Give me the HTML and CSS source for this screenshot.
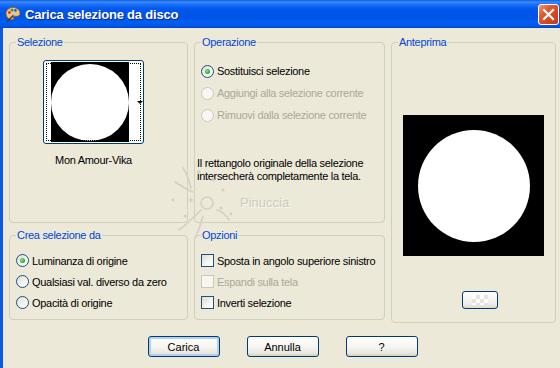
FILE: index.html
```html
<!DOCTYPE html>
<html lang="it">
<head>
    <meta charset="UTF-8">
    <meta name="viewport" content="width=device-width, initial-scale=1.0">
    <title>Carica selezione da disco</title>
    <link rel="stylesheet" href="styles.css">
</head>
<body>

<div class="window">
    <div class="titlebar">
        <svg class="app-icon" viewBox="0 0 16 16" width="16" height="16">
            <path d="M8 1.5C4 1.5 1 4.2 1 7.6c0 3.5 2.9 6 6.3 6 1.2 0 1.6-.8 1.1-1.6-.5-.8 0-1.7 1-1.7h2.4c2 0 3.2-1.3 3.2-3.1C15 4.1 12 1.5 8 1.5z" fill="#EBC48E" stroke="#8A5A2B" stroke-width="0.8"/>
            <circle cx="4.4" cy="6.6" r="1.4" fill="#E02424"/>
            <circle cx="7" cy="4.2" r="1.4" fill="#2FA02F"/>
            <circle cx="10.4" cy="4.4" r="1.3" fill="#2255E0"/>
            <circle cx="12.5" cy="7.2" r="1.2" fill="#F2D21E"/>
            <path d="M2.5 15.2l6.5-6.4" stroke="#5B3414" stroke-width="1.6" stroke-linecap="round"/>
            <path d="M9 8.8l1.6-1.6" stroke="#C9C9C9" stroke-width="1.8" stroke-linecap="round"/>
        </svg>
        <span class="title">Carica selezione da disco</span>
        <button class="close-btn" type="button" aria-label="Chiudi">
            <svg viewBox="0 0 19 19" width="19" height="19">
                <path d="M5 5l9 9M14 5l-9 9" stroke="#fff" stroke-width="2.2" stroke-linecap="square"/>
            </svg>
        </button>
    </div>

    <div class="client">
        <div class="groups">
            <fieldset class="group">
                <legend>Selezione</legend>
                <div class="sel-body">
                    <div class="thumb">
                        <div class="thumb-img"><div class="thumb-disc"></div></div>
                        <span class="drop-arrow"></span>
                    </div>
                    <div class="thumb-name">Mon Amour-Vika</div>
                </div>
            </fieldset>

            <fieldset class="group">
                <legend>Operazione</legend>
                <div class="op-body">
                    <label class="choice"><input type="radio" class="radio" name="op" checked>Sostituisci selezione</label>
                    <label class="choice disabled"><input type="radio" class="radio" name="op" disabled>Aggiungi alla selezione corrente</label>
                    <label class="choice disabled"><input type="radio" class="radio" name="op" disabled>Rimuovi dalla selezione corrente</label>
                    <p class="info">Il rettangolo originale della selezione<br>intersecherà completamente la tela.</p>
                </div>
            </fieldset>

            <fieldset class="group group-preview">
                <legend>Anteprima</legend>
                <div class="preview-body">
                    <div class="preview-box"><div class="preview-disc"></div></div>
                    <button class="swatch-btn" type="button"><span class="checker"></span></button>
                </div>
            </fieldset>

            <fieldset class="group">
                <legend>Crea selezione da</legend>
                <div class="list-body">
                    <label class="choice"><input type="radio" class="radio" name="src" checked>Luminanza di origine</label>
                    <label class="choice"><input type="radio" class="radio" name="src">Qualsiasi val. diverso da zero</label>
                    <label class="choice"><input type="radio" class="radio" name="src">Opacità di origine</label>
                </div>
            </fieldset>

            <fieldset class="group">
                <legend>Opzioni</legend>
                <div class="list-body">
                    <label class="choice"><input type="checkbox" class="check">Sposta in angolo superiore sinistro</label>
                    <label class="choice disabled"><input type="checkbox" class="check" disabled>Espandi sulla tela</label>
                    <label class="choice"><input type="checkbox" class="check">Inverti selezione</label>
                </div>
            </fieldset>
        </div>

        <div class="actions">
            <button class="btn btn-default" type="button">Carica</button>
            <button class="btn" type="button">Annulla</button>
            <button class="btn" type="button">?</button>
        </div>
    </div>

    <div class="watermark">
        <svg viewBox="0 0 90 80" width="90" height="80">
            <g fill="none" stroke="#D3D0C3" stroke-width="1.6" stroke-linecap="round">
                <circle cx="42" cy="43" r="6"/>
                <path d="M10 22c6 4 12 8 18 10"/>
                <path d="M18 8c4 6 6 12 8 20"/>
                <path d="M14 70c8-6 14-12 22-20"/>
                <path d="M30 78c4-8 6-14 8-22"/>
                <path d="M52 50c6 2 10 6 12 10"/>
            </g>
            <g fill="#D3D0C3">
                <circle cx="34" cy="12" r="1.8"/>
                <circle cx="48" cy="20" r="1.8"/>
                <circle cx="58" cy="30" r="1.6"/>
                <circle cx="26" cy="40" r="1.8"/>
                <circle cx="56" cy="48" r="1.6"/>
                <circle cx="66" cy="54" r="1.4"/>
                <circle cx="20" cy="56" r="1.6"/>
                <circle cx="8" cy="40" r="1.4"/>
            </g>
        </svg>
        <span class="watermark-text">Pinuccia</span>
    </div>
</div>

</body>
</html>
```

FILE: styles.css
```css
body {
    margin: 0;
    font-family: "Liberation Sans", Arial, sans-serif;
    font-size: 11px;
    letter-spacing: -0.3px;
    color: #000;
    background-color: #ECE9D8;
}
.window {
    position: relative;
    width: 560px;
    height: 368px;
    overflow: hidden;
    background-color: #ECE9D8;
}

/* title bar */
.titlebar {
    height: 28px;
    display: flex;
    align-items: center;
    padding-left: 5px;
    background: linear-gradient(to bottom, #0A5FD8 0, #3D8BFF 2px, #1F72F8 4px, #0058EE 9px, #0053E3 16px, #005EF2 23px, #0057E8 26px, #0040C8 28px);
}
.app-icon {
    flex: none;
}
.title {
    margin-left: 4px;
    color: #fff;
    font-weight: bold;
    font-size: 13px;
    letter-spacing: -0.2px;
    text-shadow: 1px 1px 0 #0A2A9A;
}
.close-btn {
    margin-left: auto;
    margin-right: 1px;
    width: 21px;
    height: 21px;
    padding: 0;
    display: flex;
    align-items: center;
    justify-content: center;
    border: 1px solid #fff;
    border-radius: 3px;
    background: linear-gradient(135deg, #F0987A 0, #E2582F 35%, #D4431E 70%, #C23A1B 100%);
}

/* client area */
.client {
    height: 340px;
    box-sizing: border-box;
    border-left: 3px solid #0B58E6;
    padding: 8px 4px 0 6px;
}
.groups {
    display: grid;
    grid-template-columns: 179px 191px 165px;
    grid-template-rows: 187px 91px;
    gap: 6px;
}
.group {
    margin: 0;
    padding: 0 6px;
    min-width: 0;
    border: 1px solid #D0D0BF;
    border-radius: 4px;
}
.group legend {
    padding: 0 1px;
    color: #0046D5;
}
.group-preview {
    grid-row: span 2;
    margin-bottom: -3px;
}

/* selezione */
.sel-body {
    display: flex;
    flex-direction: column;
    align-items: center;
    padding: 12px 10px 0 0;
}
.thumb {
    width: 101px;
    height: 84px;
    box-sizing: border-box;
    display: flex;
    align-items: center;
    padding: 1px 0 1px 7px;
    border: 1px solid #003C74;
    border-radius: 3px;
    background: #fff;
    outline: 1px dotted #000;
    outline-offset: -4px;
}
.thumb-img {
    width: 78px;
    height: 80px;
    display: flex;
    align-items: center;
    justify-content: center;
    background: #000;
}
.thumb-disc {
    width: 78px;
    height: 77px;
    border-radius: 50%;
    background: #fff;
}
.drop-arrow {
    margin-left: 8px;
    border-left: 3px solid transparent;
    border-right: 3px solid transparent;
    border-top: 3px solid #000;
}
.thumb-name {
    margin-top: 10px;
}

/* radio / checkbox rows */
.op-body {
    padding-top: 12px;
}
.list-body {
    padding-top: 9px;
}
.choice {
    display: flex;
    align-items: center;
    gap: 3px;
    height: 21px;
}
.op-body .choice {
    height: 22px;
}
.choice.disabled {
    color: #ACA899;
}
.radio, .check {
    appearance: none;
    flex: none;
    position: relative;
    width: 13px;
    height: 13px;
    margin: 0;
    border: 1px solid #1C5180;
    background: linear-gradient(135deg, #DCDBD3 0, #F4F4F0 55%, #fff 100%);
}
.radio {
    border-radius: 50%;
}
.radio:checked::after {
    content: '';
    position: absolute;
    left: 3px;
    top: 3px;
    width: 5px;
    height: 5px;
    border-radius: 50%;
    background: radial-gradient(circle at 40% 40%, #8BEA8B, #21A121 70%);
}
.radio:disabled, .check:disabled {
    border-color: #CAC8BB;
    background: #F7F6F1;
}
.info {
    margin: 31px 0 0 -4px;
    line-height: 13px;
}

/* anteprima */
.preview-body {
    display: flex;
    flex-direction: column;
    padding-top: 67px;
}
.preview-box {
    align-self: center;
    width: 141px;
    height: 141px;
    display: flex;
    align-items: center;
    justify-content: center;
    background: #000;
}
.preview-disc {
    width: 112px;
    height: 112px;
    border-radius: 50%;
    background: #fff;
}
.swatch-btn {
    align-self: flex-start;
    margin: 35px 0 0 64px;
    width: 36px;
    height: 18px;
    padding: 0;
    display: flex;
    align-items: center;
    justify-content: center;
    border: 1px solid #003C74;
    border-radius: 3px;
    background: linear-gradient(#fff, #F0EFEA 70%, #DCD8CC);
}
.checker {
    width: 16px;
    height: 10px;
    background: conic-gradient(#E4E4E4 25%, #fff 0 50%, #E4E4E4 0 75%, #fff 0) 0 0 / 8px 8px;
}

/* buttons */
.actions {
    display: flex;
    justify-content: center;
    gap: 27px;
    margin-top: 16px;
}
.btn {
    width: 72px;
    height: 21px;
    box-sizing: border-box;
    padding: 0;
    font: inherit;
    color: #000;
    border: 1px solid #003C74;
    border-radius: 3px;
    background: linear-gradient(#fff, #F5F4EF 55%, #E8E6DC 85%, #D6D0C5);
}
.btn-default {
    box-shadow: inset 0 0 0 2px #B4CFF4;
}

/* faint watermark over the dialog */
.watermark {
    position: absolute;
    left: 165px;
    top: 160px;
    width: 140px;
    height: 80px;
    pointer-events: none;
}
.watermark-text {
    position: absolute;
    left: 75px;
    top: 35px;
    font-size: 13px;
    letter-spacing: 0;
    color: #CDCABC;
    text-shadow: 1px 1px 0 #F8F7F2;
}
```
